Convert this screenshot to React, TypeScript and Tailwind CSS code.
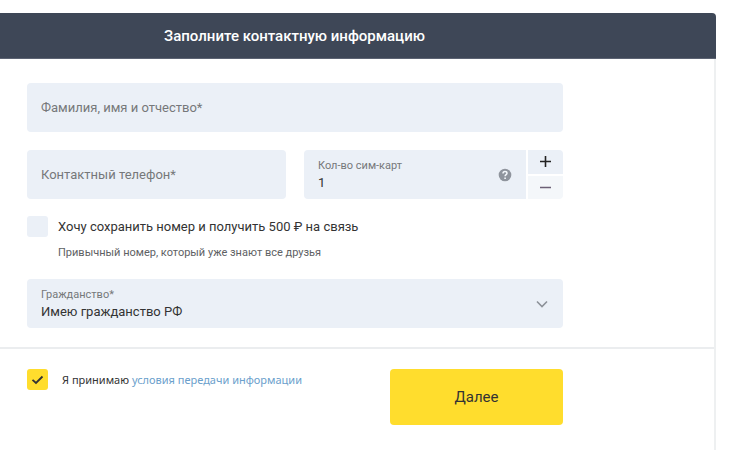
import { useState } from "react";

const field = "h-[49px] rounded bg-[#ebf0f7]";
const fieldLabel = "text-[11px] leading-4 text-[#76787a]";

function CheckMark() {
  return (
    <svg viewBox="0 0 21 21" className="pointer-events-none col-start-1 row-start-1 size-[21px]" fill="none" stroke="#333" strokeWidth="1.8" aria-hidden="true">
      <path d="M5.5 10.8 9 14 15.5 7.5" />
    </svg>
  );
}

export default function App() {
  const [sims, setSims] = useState(1);
  const [keep, setKeep] = useState(false);
  const [agree, setAgree] = useState(true);

  return (
    <main className="min-h-screen bg-white pt-[13px] pr-[18px] font-['Roboto',sans-serif] text-[#333]">
      <header className="flex h-[46px] items-center justify-center rounded-tr border-b border-[#5c6373] bg-[#3e4757] pr-[127px]">
        <h1 className="text-[15px] leading-6 font-medium text-white">Заполните контактную информацию</h1>
      </header>
      <form className="min-h-[391px] border-r-2 border-[#eef0f1]" onSubmit={(e) => e.preventDefault()}>
        <div className="border-b-2 border-[#ebedef] px-[27px] pt-6 pb-[19px]">
          <div className="flex max-w-[536px] flex-col">
            <input
              type="text"
              aria-label="Фамилия, имя и отчество*"
              placeholder="Фамилия, имя и отчество*"
              className={`${field} w-full px-3.5 text-[13px] outline-none placeholder:text-[#76787a]`}
            />
            <div className="mt-[18px] grid grid-cols-2 gap-[18px]">
              <input
                type="tel"
                aria-label="Контактный телефон*"
                placeholder="Контактный телефон*"
                className={`${field} w-full min-w-0 px-3.5 text-[13px] outline-none placeholder:text-[#76787a]`}
              />
              <div className="flex h-[49px] gap-0.5 overflow-hidden rounded">
                <div className="flex min-w-0 flex-1 items-center justify-between bg-[#ebf0f7] px-3.5">
                  <div className="flex min-w-0 flex-col">
                    <label htmlFor="sims" className={fieldLabel}>Кол-во сим-карт</label>
                    <input
                      id="sims"
                      type="text"
                      inputMode="numeric"
                      value={sims}
                      onChange={(e) => setSims(Number(e.target.value) || 1)}
                      className="h-[18px] w-full bg-transparent text-[13px] outline-none"
                    />
                  </div>
                  <button type="button" aria-label="Подсказка" className="shrink-0">
                    <svg viewBox="0 0 14 14" className="size-3.5" aria-hidden="true">
                      <circle cx="7" cy="7" r="6.3" fill="#8f949d" />
                      <path d="M5 5.6C5 4.3 5.9 3.6 7 3.6s2 .7 2 1.7c0 1.3-1.9 1.4-1.9 3" fill="none" stroke="#f3f6fa" strokeWidth="1.5" />
                      <path d="M6.3 9.4h1.6V11H6.3z" fill="#f3f6fa" />
                    </svg>
                  </button>
                </div>
                <div className="flex w-[35px] flex-col gap-0.5">
                  <button type="button" aria-label="Больше" onClick={() => setSims(sims + 1)} className="flex flex-1 items-center justify-center bg-[#ebf0f7]">
                    <svg viewBox="0 0 11 11" className="size-[11px]" stroke="#222" strokeWidth="1.6" aria-hidden="true">
                      <path d="M5.5 0v11M0 5.5h11" />
                    </svg>
                  </button>
                  <button type="button" aria-label="Меньше" onClick={() => setSims(Math.max(1, sims - 1))} className="flex flex-1 items-center justify-center bg-[#f4f7fa]">
                    <svg viewBox="0 0 11 11" className="size-[11px]" stroke="#6c6076" strokeWidth="1.3" aria-hidden="true">
                      <path d="M0 5.5h11" />
                    </svg>
                  </button>
                </div>
              </div>
            </div>
            <div className="mt-[17px] flex items-center gap-2.5">
              <div className="grid">
                <input
                  id="keep"
                  type="checkbox"
                  checked={keep}
                  onChange={() => setKeep(!keep)}
                  aria-describedby="keep-note"
                  className="col-start-1 row-start-1 size-[21px] appearance-none rounded-[3px] bg-[#ebf0f7] checked:bg-[#ffdd2d]"
                />
                {keep && <CheckMark />}
              </div>
              <label htmlFor="keep" className="text-[13px] leading-5">Хочу сохранить номер и получить 500 ₽ на связь</label>
            </div>
            <p id="keep-note" className="mt-2 ml-[31px] text-[11px] leading-4 text-[#5e6164]">Привычный номер, который уже знают все друзья</p>
            <div className="mt-[18px] grid">
              <select
                id="citizenship"
                className={`${field} col-start-1 row-start-1 w-full appearance-none px-3.5 pt-4 text-[13px] outline-none`}
              >
                <option>Имею гражданство РФ</option>
                <option>Другое гражданство</option>
              </select>
              <label htmlFor="citizenship" className={`${fieldLabel} pointer-events-none col-start-1 row-start-1 self-start px-3.5 pt-2`}>
                Гражданство*
              </label>
              <svg
                viewBox="0 0 12 8"
                className="pointer-events-none col-start-1 row-start-1 mr-[15px] h-2 w-3 self-center justify-self-end"
                fill="none"
                stroke="#8d9299"
                strokeWidth="1.6"
                aria-hidden="true"
              >
                <path d="m1 1.5 5 5 5-5" />
              </svg>
            </div>
          </div>
        </div>
        <div className="px-[27px] pt-5">
          <div className="flex max-w-[536px] items-start justify-between">
            <div className="flex items-center gap-3.5">
              <div className="grid">
                <input
                  id="agree"
                  type="checkbox"
                  checked={agree}
                  onChange={() => setAgree(!agree)}
                  className="col-start-1 row-start-1 size-[21px] appearance-none rounded-[3px] bg-[#ebf0f7] checked:bg-[#ffdd2d]"
                />
                {agree && <CheckMark />}
              </div>
              <label htmlFor="agree" className="font-['Noto_Sans','Open_Sans',sans-serif] text-[11px] leading-4">
                Я принимаю <a href="#terms" className="text-[#6ba0cc]">условия передачи информации</a>
              </label>
            </div>
            <button type="submit" className="h-14 w-[173px] rounded bg-[#ffdd2d] text-[15px]">Далее</button>
          </div>
        </div>
      </form>
    </main>
  );
}
